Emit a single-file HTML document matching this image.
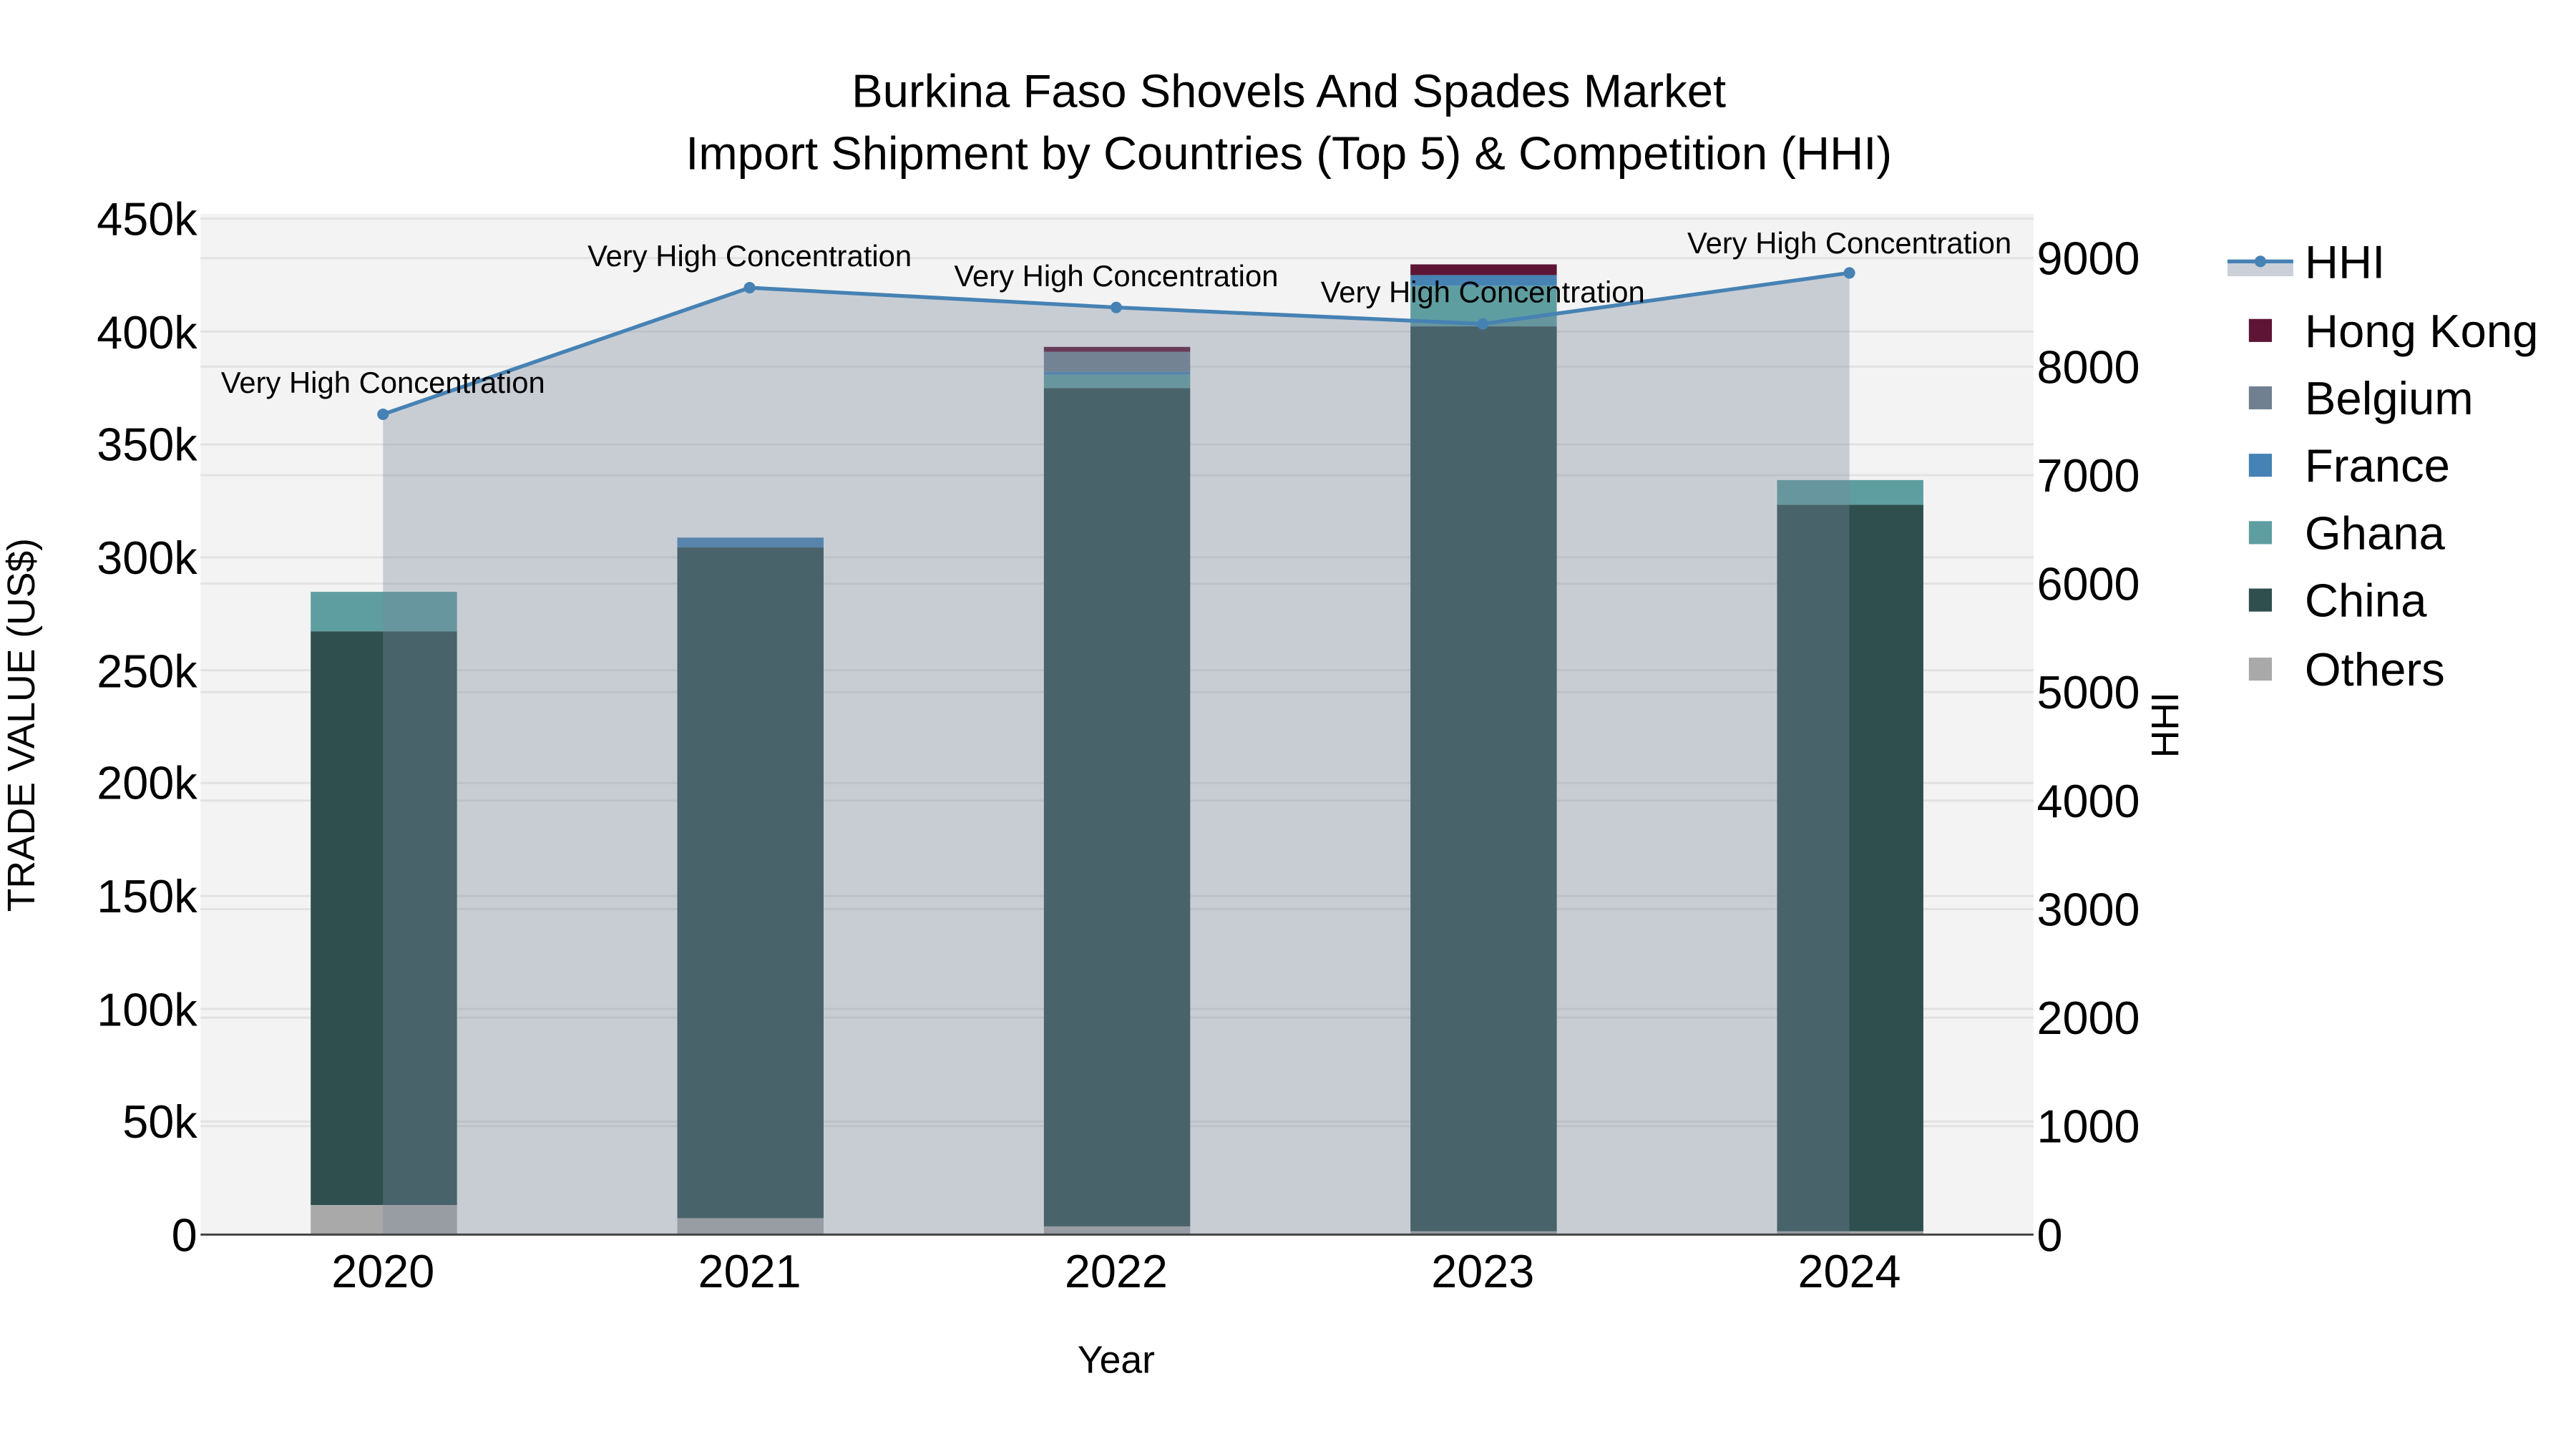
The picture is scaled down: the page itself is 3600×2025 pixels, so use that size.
<!DOCTYPE html>
<html><head><meta charset="utf-8"><style>
html,body{margin:0;padding:0;background:#fff;}
svg{display:block;}
text{font-family:"Liberation Sans",sans-serif;fill:#000;}
</style></head><body>
<svg width="3600" height="2025" viewBox="0 0 1567 881.4" xmlns="http://www.w3.org/2000/svg">
<rect x="0" y="0" width="1567" height="881.4" fill="#fff"/>
<rect x="122" y="130" width="1115" height="621" fill="#f3f3f3"/>
<g stroke="#e2e2e2" stroke-width="1.3">
<line x1="122" x2="1237" y1="682.3" y2="682.3"/><line x1="122" x2="1237" y1="613.7" y2="613.7"/>
<line x1="122" x2="1237" y1="545" y2="545"/><line x1="122" x2="1237" y1="476.3" y2="476.3"/>
<line x1="122" x2="1237" y1="407.7" y2="407.7"/><line x1="122" x2="1237" y1="339" y2="339"/>
<line x1="122" x2="1237" y1="270.3" y2="270.3"/><line x1="122" x2="1237" y1="201.7" y2="201.7"/>
<line x1="122" x2="1237" y1="133" y2="133"/>
<line x1="122" x2="1237" y1="685" y2="685"/><line x1="122" x2="1237" y1="619" y2="619"/>
<line x1="122" x2="1237" y1="553" y2="553"/><line x1="122" x2="1237" y1="487" y2="487"/>
<line x1="122" x2="1237" y1="421" y2="421"/><line x1="122" x2="1237" y1="355" y2="355"/>
<line x1="122" x2="1237" y1="289" y2="289"/><line x1="122" x2="1237" y1="223" y2="223"/>
<line x1="122" x2="1237" y1="157" y2="157"/>
</g>
<g>
<rect x="189" y="733" width="89" height="18" fill="#a9a9a9"/>
<rect x="189" y="384" width="89" height="349" fill="#2f4f4f"/>
<rect x="189" y="360" width="89" height="24" fill="#5f9ea0"/>

<rect x="412" y="741" width="89" height="10" fill="#a9a9a9"/>
<rect x="412" y="333" width="89" height="408" fill="#2f4f4f"/>
<rect x="412" y="327" width="89" height="6" fill="#4682b4"/>

<rect x="635" y="746" width="89" height="5" fill="#a9a9a9"/>
<rect x="635" y="236" width="89" height="510" fill="#2f4f4f"/>
<rect x="635" y="228" width="89" height="8" fill="#5f9ea0"/>
<rect x="635" y="226" width="89" height="2" fill="#4682b4"/>
<rect x="635" y="214" width="89" height="12" fill="#708090"/>
<rect x="635" y="211" width="89" height="3" fill="#5e1535"/>

<rect x="858" y="749" width="89" height="2" fill="#a9a9a9"/>
<rect x="858" y="198.5" width="89" height="550.5" fill="#2f4f4f"/>
<rect x="858" y="173.8" width="89" height="24.7" fill="#5f9ea0"/>
<rect x="858" y="167.3" width="89" height="6.5" fill="#4682b4"/>
<rect x="858" y="160.8" width="89" height="6.5" fill="#5e1535"/>

<rect x="1081" y="749" width="89" height="2" fill="#a9a9a9"/>
<rect x="1081" y="307" width="89" height="442" fill="#2f4f4f"/>
<rect x="1081" y="292" width="89" height="15" fill="#5f9ea0"/>
</g>
<polygon points="233,751 233,252 456,175 679,187 902,197 1125,166 1125,751" fill="rgb(123,135,157)" fill-opacity="0.354"/>
<line x1="122" x2="1237" y1="751" y2="751" stroke="#444" stroke-width="1.3"/>
<polyline points="233,252 456,175 679,187 902,197 1125,166" fill="none" stroke="#4682b4" stroke-width="2.3"/>
<g fill="#4682b4"><circle cx="233" cy="252" r="3.5"/><circle cx="456" cy="175" r="3.5"/><circle cx="679" cy="187" r="3.5"/><circle cx="902" cy="197" r="3.5"/><circle cx="1125" cy="166" r="3.5"/></g>
<g font-size="18.2" text-anchor="middle">
<text x="233" y="239">Very High Concentration</text>
<text x="456" y="162">Very High Concentration</text>
<text x="679" y="174">Very High Concentration</text>
<text x="902" y="184">Very High Concentration</text>
<text x="1125" y="154">Very High Concentration</text>
</g>
<g font-size="28.4" text-anchor="middle">
<text x="784" y="65">Burkina Faso Shovels And Spades Market</text>
<text x="784" y="103">Import Shipment by Countries (Top 5) &amp; Competition (HHI)</text>
</g>
<g font-size="28.2" text-anchor="end">
<text x="120" y="761">0</text><text x="120" y="692">50k</text><text x="120" y="624">100k</text>
<text x="120" y="555">150k</text><text x="120" y="486">200k</text><text x="120" y="418">250k</text>
<text x="120" y="349">300k</text><text x="120" y="280">350k</text><text x="120" y="212">400k</text>
<text x="120" y="143">450k</text>
</g>
<g font-size="28.2" text-anchor="start">
<text x="1239" y="761">0</text><text x="1239" y="695">1000</text><text x="1239" y="629">2000</text>
<text x="1239" y="563">3000</text><text x="1239" y="497">4000</text><text x="1239" y="431">5000</text>
<text x="1239" y="365">6000</text><text x="1239" y="299">7000</text><text x="1239" y="233">8000</text>
<text x="1239" y="167">9000</text>
</g>
<g font-size="28.2" text-anchor="middle">
<text x="233" y="783">2020</text><text x="456" y="783">2021</text><text x="679" y="783">2022</text>
<text x="902" y="783">2023</text><text x="1125" y="783">2024</text>
</g>
<text x="679" y="835" font-size="23.3" text-anchor="middle">Year</text>
<text transform="translate(21,441) rotate(-90)" font-size="23.3" text-anchor="middle">TRADE VALUE (US$)</text>
<text transform="translate(1325,441) rotate(-90)" font-size="23.3" text-anchor="middle">HHI</text>
<rect x="1355" y="159" width="40" height="9" fill="rgb(123,135,157)" fill-opacity="0.4"/>
<line x1="1355" x2="1395" y1="159" y2="159" stroke="#4682b4" stroke-width="2.3"/>
<circle cx="1375" cy="159" r="3.5" fill="#4682b4"/>
<rect x="1368" y="194" width="14" height="14" fill="#5e1535"/>
<rect x="1368" y="235" width="14" height="14" fill="#708090"/>
<rect x="1368" y="276" width="14" height="14" fill="#4682b4"/>
<rect x="1368" y="317" width="14" height="14" fill="#5f9ea0"/>
<rect x="1368" y="358" width="14" height="14" fill="#2f4f4f"/>
<rect x="1368" y="400" width="14" height="14" fill="#a9a9a9"/>
<g font-size="28.4">
<text x="1402" y="169">HHI</text>
<text x="1402" y="211">Hong Kong</text>
<text x="1402" y="252">Belgium</text>
<text x="1402" y="293">France</text>
<text x="1402" y="334">Ghana</text>
<text x="1402" y="375">China</text>
<text x="1402" y="417">Others</text>
</g>
</svg>
</body></html>
